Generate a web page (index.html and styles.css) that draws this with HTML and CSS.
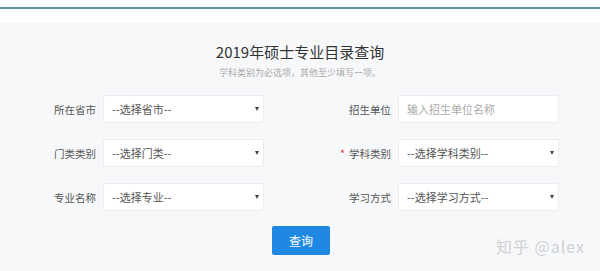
FILE: index.html
```html
<html lang="zh-CN">
<head>
    <meta charset="UTF-8">
    <meta name="viewport" content="width=device-width, initial-scale=1.0">
    <title>2019年硕士专业目录查询</title>
    <link rel="stylesheet" href="styles.css">
</head>
<body>
    <div class="top-bar"></div>
    <div class="panel">
        <h1 class="title">2019年硕士专业目录查询</h1>
        <p class="subtitle">学科类别为必选项，其他至少填写一项。</p>
        <div class="form">
            <div class="field">
                <label class="label">所在省市</label>
                <div class="select-wrap">
                    <select class="control"><option>--选择省市--</option></select>
                    <span class="arrow"></span>
                </div>
            </div>
            <div class="field">
                <label class="label">招生单位</label>
                <input class="control" type="text" placeholder="输入招生单位名称">
            </div>
            <div class="field">
                <label class="label">门类类别</label>
                <div class="select-wrap">
                    <select class="control"><option>--选择门类--</option></select>
                    <span class="arrow"></span>
                </div>
            </div>
            <div class="field">
                <label class="label"><span class="required">*</span>学科类别</label>
                <div class="select-wrap">
                    <select class="control"><option>--选择学科类别--</option></select>
                    <span class="arrow"></span>
                </div>
            </div>
            <div class="field">
                <label class="label">专业名称</label>
                <div class="select-wrap">
                    <select class="control"><option>--选择专业--</option></select>
                    <span class="arrow"></span>
                </div>
            </div>
            <div class="field">
                <label class="label">学习方式</label>
                <div class="select-wrap">
                    <select class="control"><option>--选择学习方式--</option></select>
                    <span class="arrow"></span>
                </div>
            </div>
        </div>
        <div class="actions">
            <button class="button">查询</button>
        </div>
    </div>
    <div class="watermark">知乎 @alex</div>
</body>
</html>
```

FILE: styles.css
```css
body {
    font-family: "Noto Sans CJK SC", "Noto Sans", sans-serif;
    background-color: #fdfefe;
    color: #555;
    margin: 0;
    height: 271px;
    overflow: hidden;
    position: relative;
}
.top-bar {
    height: 2px;
    margin-top: 7px;
    background-color: #5e91a4;
}
.panel {
    margin-top: 14px;
    background-color: #f7f8fa;
    padding-top: 19px;
    height: 229px;
}
.title {
    margin: 0;
    text-align: center;
    font-size: 15px;
    line-height: 20px;
    font-weight: normal;
    color: #333;
}
.subtitle {
    margin: 4px 0 0;
    text-align: center;
    font-size: 9px;
    line-height: 14px;
    color: #aaa;
}
.form {
    display: grid;
    grid-template-columns: 216px 216px;
    column-gap: 79px;
    row-gap: 16px;
    margin: 15px 0 0 48px;
}
.field {
    display: flex;
    align-items: center;
    gap: 7px;
}
.label {
    width: 48px;
    display: flex;
    justify-content: flex-end;
    font-size: 10.5px;
    color: #555;
    white-space: nowrap;
}
.required {
    color: #e53935;
    margin-right: 4px;
}
.select-wrap {
    position: relative;
}
.control {
    appearance: none;
    width: 161px;
    height: 28px;
    box-sizing: border-box;
    border: 1px solid #ebedf0;
    border-radius: 2px;
    background: #fff;
    padding: 0 8px;
    font-family: inherit;
    font-size: 11px;
    color: #555;
    outline: none;
}
.control::placeholder {
    color: #aaa;
}
.arrow {
    position: absolute;
    right: 5px;
    top: 12px;
    border-left: 2px solid transparent;
    border-right: 2px solid transparent;
    border-top: 4px solid #444;
}
.actions {
    display: flex;
    justify-content: center;
    margin-top: 15px;
    padding-left: 2px;
}
.button {
    width: 58px;
    height: 29px;
    border: none;
    border-radius: 2px;
    background-color: #1f88e3;
    color: #fff;
    font-family: inherit;
    font-size: 12px;
    cursor: pointer;
}
.watermark {
    position: absolute;
    right: 15px;
    top: 234px;
    font-size: 16px;
    letter-spacing: 1px;
    color: #cfd1d3;
}
```
